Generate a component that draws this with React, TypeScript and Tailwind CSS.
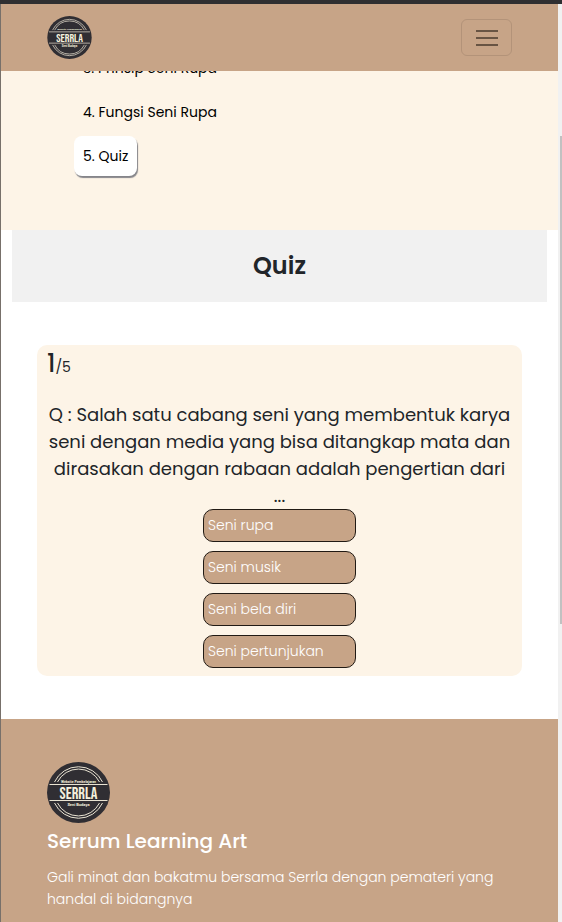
const lessons = ["3. Prinsip Seni Rupa", "4. Fungsi Seni Rupa", "5. Quiz"];
const answers = ["Seni rupa", "Seni musik", "Seni bela diri", "Seni pertunjukan"];

function Logo({ className }: { className: string }) {
  return (
    <svg viewBox="0 0 126 122" className={className} role="img" aria-label="Serrla">
      <ellipse cx="63" cy="61" rx="63" ry="61" fill="#302e33" />
      <g fill="none" stroke="#e9e3d2" strokeWidth="2">
        <path d="M15 40A53 53 0 0 1 111 40" />
        <path d="M21 40A47 47 0 0 1 105 40" />
        <path d="M15 82A53 53 0 0 0 111 82" />
        <path d="M21 82A47 47 0 0 0 105 82" />
        <path d="M5 45H121M5 77H121" />
      </g>
      <g fill="#f5f0dd" textAnchor="middle" fontWeight="700">
        <text x="63" y="41" fontSize="7" fontFamily="Roboto, sans-serif">
          Website Pembelajaran
        </text>
        <text x="63" y="73" fontSize="33" fontWeight="400" fontFamily="'Bebas Neue', 'Oswald', sans-serif">
          SERRLA
        </text>
        <text x="63" y="87" fontSize="8" fontFamily="Roboto, sans-serif">
          Seni Budaya
        </text>
      </g>
    </svg>
  );
}

export default function App() {
  return (
    <div className="flex h-screen flex-col overflow-hidden border-t-4 border-[#2f2f31] bg-white font-['Poppins','Inter',sans-serif] text-[#212529]">
      <div className="flex min-h-0 flex-1">
        <div className="min-w-0 flex-1 overflow-hidden border-l border-[#77706a]">
          <header className="flex h-[67px] items-center justify-between bg-[#c7a487] px-[46px]">
            <a href="#home">
              <Logo className="h-[43px] w-[45px]" />
            </a>
            <button
              type="button"
              aria-label="Menu"
              className="flex h-[37px] w-[51px] items-center justify-center rounded-md border border-[#b39379]"
            >
              <svg viewBox="0 0 24 18" className="h-[18px] w-6" stroke="#685443" strokeWidth="2">
                <path d="M2 2H22M2 9H22M2 16H22" strokeLinecap="square" />
              </svg>
            </button>
          </header>

          <nav className="overflow-hidden bg-[#fdf4e7] pb-[54px] pl-[73px]">
            <ul className="-mt-[23px] flex flex-col items-start gap-1 text-[14px] leading-6 text-black">
              {lessons.map((lesson, i) => (
                <li key={lesson}>
                  <a
                    href="#lesson"
                    className={
                      i === 2
                        ? "block rounded-lg bg-white px-[9px] py-2 shadow-[1px_2px_1px_#85858a]"
                        : "block px-[9px] py-2"
                    }
                  >
                    {lesson}
                  </a>
                </li>
              ))}
            </ul>
          </nav>

          <main className="px-[11px] pb-[43px]">
            <h1 className="bg-[#f1f1f1] text-center text-[24px] leading-[72px] font-semibold">Quiz</h1>
            <section className="mx-[25px] mt-[43px] rounded-[10px] bg-[#fdf4e7] px-[10px] pb-2">
              <p className="h-14 text-[14px] leading-[38px]">
                <span className="text-[24px] font-medium">1</span>/5
              </p>
              <h2 className="text-center text-[18px] leading-[27px]">
                Q : Salah satu cabang seni yang membentuk karya seni dengan media yang bisa ditangkap mata dan
                dirasakan dengan rabaan adalah pengertian dari ...
              </h2>
              <div className="mx-auto flex w-[153px] flex-col gap-[9px]">
                {answers.map((answer) => (
                  <button
                    key={answer}
                    type="button"
                    className="h-[33px] rounded-[10px] border border-[#211a14] bg-[#c7a487] px-1 text-left text-[14px] font-light text-white"
                  >
                    {answer}
                  </button>
                ))}
              </div>
            </section>
          </main>

          <footer className="h-96 bg-[#c7a487] px-[46px] pt-[43px] text-white">
            <Logo className="h-[61px] w-[63px]" />
            <h3 className="mt-[6px] text-[20px] leading-6 font-medium">Serrum Learning Art</h3>
            <p className="mt-[13px] text-[14px] leading-[22px] font-light">
              Gali minat dan bakatmu bersama Serrla dengan pemateri yang handal di bidangnya
            </p>
          </footer>
        </div>
        <div className="w-1 bg-[#f1f1f1] pt-[132px] pl-[2px]">
          <div className="h-[488px] bg-[#c1c1c1]" />
        </div>
      </div>
    </div>
  );
}
